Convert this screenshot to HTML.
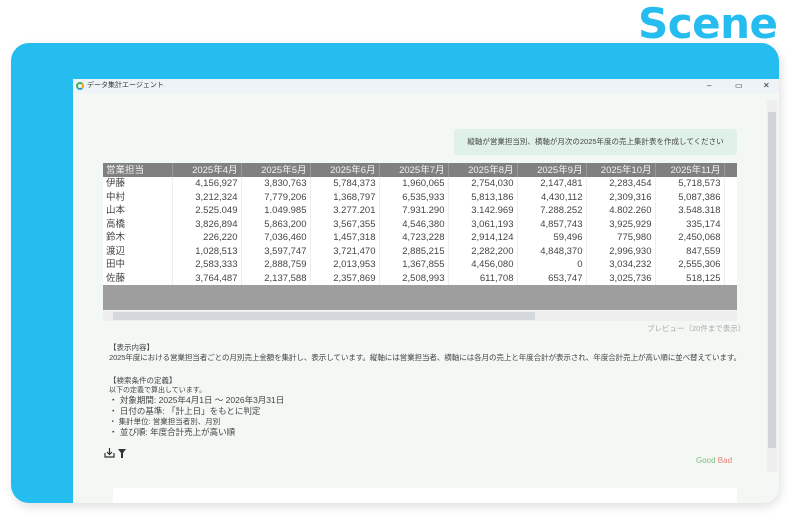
<!DOCTYPE html>
<html><head><meta charset="utf-8"><style>
*{margin:0;padding:0;box-sizing:border-box}
body{width:800px;height:524px;background:#fff;position:relative;overflow:hidden;font-family:"Liberation Sans","Noto Sans CJK JP",sans-serif;}
.scene{position:absolute;left:638px;top:0px;font-size:42px;font-weight:bold;color:#25bcef;letter-spacing:-0.5px;font-family:"DejaVu Sans","Liberation Sans",sans-serif;line-height:48px}
.blue{position:absolute;left:11px;top:43px;width:768px;height:460px;background:#25bcef;border-radius:18px;box-shadow:2px 4px 10px rgba(0,0,0,.12)}
.win{position:absolute;left:73px;top:79px;width:706px;height:424px;background:#f3f8f5;border-bottom-right-radius:16px;overflow:hidden}
.tb{height:14px;background:#eef3f8;font-size:7px;color:#333;line-height:14px;padding-left:14px;position:relative}
.logo{position:absolute;left:3px;top:3px;width:8px;height:8px;border-radius:50%;border:2px solid #3db35a;border-right-color:#f0a020;border-bottom-color:#27a0e0}
.ctl{position:absolute;top:0;font-size:8px;color:#333}
.bubble{position:absolute;left:381px;top:50px;width:283px;height:26px;background:#e0f2e8;border-radius:3px;font-size:7.5px;color:#444;line-height:26px;text-align:center}
.tw{position:absolute;left:30px;top:84px;width:634px;height:122px;overflow:hidden;background:#fff}
table{border-collapse:collapse;font-size:9.5px;color:#444;table-layout:fixed;width:706px}
td,th{width:69px;height:13.5px;line-height:13px;text-align:right;padding:0 3px;white-space:nowrap;font-weight:normal;overflow:hidden}
th{background:#808080;color:#f2f2f2;height:14px;border-right:1px solid #999}
td{background:#fff;border-right:1px solid #eee}
td:first-child,th:first-child{text-align:left}
.gray{position:absolute;left:30px;top:206px;width:634px;height:25px;background:#9e9e9e}
.hs{position:absolute;left:30px;top:232px;width:634px;height:10px;background:#eee}
.hs .th{position:absolute;left:10px;top:1px;width:422px;height:8px;background:#d4d7dc}
.txt{position:absolute;left:36px;font-size:8px;color:#444;white-space:nowrap}
.vs{position:absolute;left:694px;top:21px;width:10px;height:372px;background:#eee}
.vs .th{position:absolute;left:1px;top:12px;width:8px;height:336px;background:#d0d3d8}
</style></head><body>
<div class="scene">Scene</div>
<div class="blue"></div>
<div class="win">
<div class="tb"><div class="logo"></div>データ集計エージェント
<span class="ctl" style="left:634px">–</span><span class="ctl" style="left:662px">▭</span><span class="ctl" style="left:690px">✕</span></div>
<div class="bubble">縦軸が営業担当別、横軸が月次の2025年度の売上集計表を作成してください</div>
<div class="tw"><table>
<tr><th>営業担当</th><th>2025年4月</th><th>2025年5月</th><th>2025年6月</th><th>2025年7月</th><th>2025年8月</th><th>2025年9月</th><th>2025年10月</th><th>2025年11月</th><th style="width:87px"></th></tr>
<tr><td>伊藤</td><td>4,156,927</td><td>3,830,763</td><td>5,784,373</td><td>1,960,065</td><td>2,754,030</td><td>2,147,481</td><td>2,283,454</td><td>5,718,573</td><td></td></tr>
<tr><td>中村</td><td>3,212,324</td><td>7,779,206</td><td>1,368,797</td><td>6,535,933</td><td>5,813,186</td><td>4,430,112</td><td>2,309,316</td><td>5,087,386</td><td></td></tr>
<tr><td>山本</td><td>2.525.049</td><td>1.049.985</td><td>3.277.201</td><td>7.931.290</td><td>3.142.969</td><td>7.288.252</td><td>4.802.260</td><td>3.548.318</td><td></td></tr>
<tr><td>高橋</td><td>3,826,894</td><td>5,863,200</td><td>3,567,355</td><td>4,546,380</td><td>3,061,193</td><td>4,857,743</td><td>3,925,929</td><td>335,174</td><td></td></tr>
<tr><td>鈴木</td><td>226,220</td><td>7,036,460</td><td>1,457,318</td><td>4,723,228</td><td>2,914,124</td><td>59,496</td><td>775,980</td><td>2,450,068</td><td></td></tr>
<tr><td>渡辺</td><td>1,028,513</td><td>3,597,747</td><td>3,721,470</td><td>2,885,215</td><td>2,282,200</td><td>4,848,370</td><td>2,996,930</td><td>847,559</td><td></td></tr>
<tr><td>田中</td><td>2,583,333</td><td>2,888,759</td><td>2,013,953</td><td>1,367,855</td><td>4,456,080</td><td>0</td><td>3,034,232</td><td>2,555,306</td><td></td></tr>
<tr><td>佐藤</td><td>3,764,487</td><td>2,137,588</td><td>2,357,869</td><td>2,508,993</td><td>611,708</td><td>653,747</td><td>3,025,736</td><td>518,125</td><td></td></tr>
</table></div>
<div class="gray"></div>
<div class="hs"><div class="th"></div></div>
<div class="txt" style="left:574px;top:244px;font-size:7.5px;color:#aaa">プレビュー（20件まで表示）</div>
<div class="txt" style="top:263px;font-size:7.5px">【表示内容】</div>
<div class="txt" style="top:273px;font-size:7.6px;letter-spacing:-0.15px">2025年度における営業担当者ごとの月別売上金額を集計し、表示しています。縦軸には営業担当者、横軸には各月の売上と年度合計が表示され、年度合計売上が高い順に並べ替えています。</div>
<div class="txt" style="top:296px;font-size:7.5px">【検索条件の定義】</div>
<div class="txt" style="top:306px;font-size:7px">以下の定義で算出しています。</div>
<div class="txt" style="top:315px;font-size:8.5px">・ 対象期間: 2025年4月1日 ～ 2026年3月31日</div>
<div class="txt" style="top:326px;font-size:8.5px">・ 日付の基準: 「計上日」をもとに判定</div>
<div class="txt" style="top:337px;font-size:7.5px">・ 集計単位: 営業担当者別、月別</div>
<div class="txt" style="top:347px;font-size:8.5px">・ 並び順: 年度合計売上が高い順</div>
<svg style="position:absolute;left:31px;top:368px" width="24" height="12"><path d="M1 6v4h9V6M5.5 1v6M3 5l2.5 2.5L8 5" stroke="#333" stroke-width="1.2" fill="none"/><path d="M14 2h8l-3 4v5h-2V6z" fill="#333"/></svg>
<div class="txt" style="left:623px;top:377px;font-size:8px;color:#7cc07c">Good <span style="color:#f08070">Bad</span></div>
<div style="position:absolute;left:40px;top:409px;width:624px;height:20px;background:#fff"></div>
<div class="vs"><div class="th"></div></div>
</div>
</body></html>
